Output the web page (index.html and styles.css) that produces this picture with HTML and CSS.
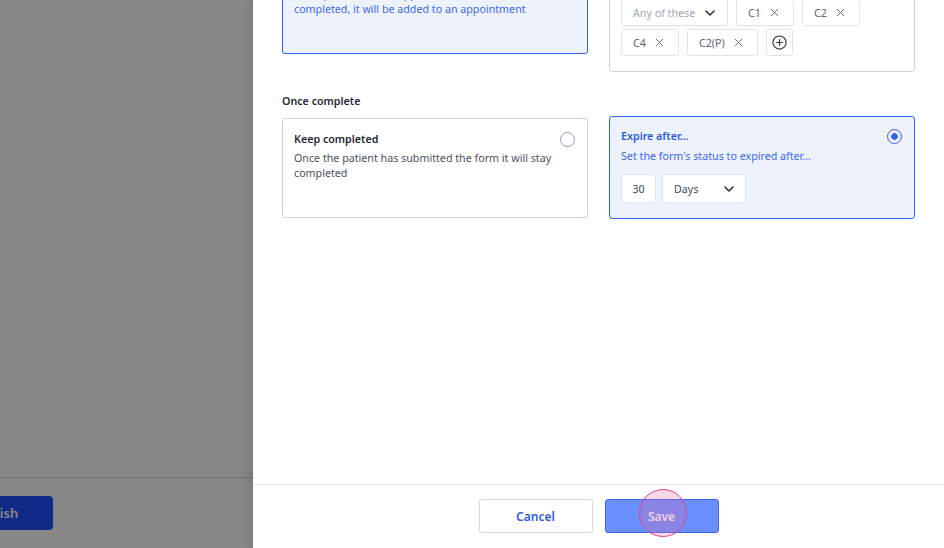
FILE: index.html
```html
<!DOCTYPE html>
<html lang="en">
<head>
    <meta charset="UTF-8">
    <title>Form settings</title>
    <link rel="stylesheet" href="styles.css">
</head>
<body>
    <!-- Page underneath the drawer -->
    <div class="page">
        <div class="page-main"></div>
        <div class="page-footer">
            <button class="publish-btn">Publish</button>
        </div>
    </div>
    <div class="overlay"></div>

    <!-- Settings drawer -->
    <aside class="drawer">
        <div class="drawer-body">
            <div class="drawer-content">
                <div class="option-grid top-grid">
                    <div class="option-card selected top-card">
                        <div class="option-head">
                            <span class="option-title">Add to appointment</span>
                        </div>
                        <div class="option-desc">If the patient has an appointment when the form is<br>completed, it will be added to an appointment</div>
                    </div>
                    <div class="filter-card">
                        <div class="filter-title">Appointment types</div>
                        <div class="chip-list">
                            <div class="select-chip">
                                <span class="placeholder">Any of these</span>
                                <svg class="chevron" viewBox="0 0 10 6"><path d="M1 1l4 4 4-4" fill="none" stroke="#2b3340" stroke-width="1.6" stroke-linecap="round" stroke-linejoin="round"/></svg>
                            </div>
                            <div class="chip">C1 <svg class="chip-x" viewBox="0 0 10 10"><path d="M1 1l8 8M9 1l-8 8" stroke="#6b7483" stroke-width="1.1"/></svg></div>
                            <div class="chip">C2 <svg class="chip-x" viewBox="0 0 10 10"><path d="M1 1l8 8M9 1l-8 8" stroke="#6b7483" stroke-width="1.1"/></svg></div>
                            <div class="chip">C4 <svg class="chip-x" viewBox="0 0 10 10"><path d="M1 1l8 8M9 1l-8 8" stroke="#6b7483" stroke-width="1.1"/></svg></div>
                            <div class="chip">C2(P) <svg class="chip-x" viewBox="0 0 10 10"><path d="M1 1l8 8M9 1l-8 8" stroke="#6b7483" stroke-width="1.1"/></svg></div>
                            <div class="chip add-chip">
                                <svg class="plus" viewBox="0 0 16 16"><circle cx="8" cy="8" r="7" fill="none" stroke="#2b3340" stroke-width="1.2"/><path d="M8 4.5v7M4.5 8h7" stroke="#2b3340" stroke-width="1.3"/></svg>
                            </div>
                        </div>
                    </div>
                </div>

                <div class="section-label">Once complete</div>

                <div class="option-grid">
                    <div class="option-card keep-card">
                        <div class="option-head">
                            <span class="option-title">Keep completed</span>
                            <span class="radio"></span>
                        </div>
                        <div class="option-desc">Once the patient has submitted the form it will stay completed</div>
                    </div>
                    <div class="option-card selected expire-card">
                        <div class="option-head">
                            <span class="option-title">Expire after...</span>
                            <span class="radio checked"></span>
                        </div>
                        <div class="option-desc">Set the form's status to expired after...</div>
                        <div class="expire-row">
                            <div class="num-box">30</div>
                            <div class="unit-select">
                                <span>Days</span>
                                <svg class="chevron" viewBox="0 0 10 6"><path d="M1 1l4 4 4-4" fill="none" stroke="#2b3340" stroke-width="1.6" stroke-linecap="round" stroke-linejoin="round"/></svg>
                            </div>
                        </div>
                    </div>
                </div>
            </div>
        </div>
        <div class="drawer-footer">
            <button class="btn btn-cancel">Cancel</button>
            <button class="btn btn-save">Save</button>
        </div>
    </aside>

    <!-- click indicator -->
    <div class="click-ring"></div>
</body>
</html>
```

FILE: styles.css
```css
body {
    margin: 0;
    width: 944px;
    height: 548px;
    overflow: hidden;
    position: relative;
    font-family: 'Noto Sans', sans-serif;
    font-size: 10.7px;
    color: #2b3340;
    background: #fff;
}
.page {
    height: 100%;
    display: flex;
    flex-direction: column;
}
.page-main {
    flex: 1;
}
.page-footer {
    height: 71px;
    border-top: 1px solid #d2d6dc;
    padding-top: 18px;
    box-sizing: border-box;
}
.publish-btn {
    margin-left: -63px;
    width: 116px;
    height: 34px;
    border: none;
    border-radius: 4px;
    background: #1d50ff;
    color: #fff;
    font-family: inherit;
    font-size: 13px;
    font-weight: 600;
}
.overlay {
    position: absolute;
    inset: 0;
    background: rgba(0, 0, 0, 0.47);
}
.drawer {
    position: absolute;
    top: 0;
    right: 0;
    bottom: 0;
    width: 691px;
    background: #fff;
    display: flex;
    flex-direction: column;
    box-shadow: -3px 0 10px rgba(0, 0, 0, 0.12);
}
.drawer-body {
    flex: 1;
    overflow: hidden;
}
.drawer-content {
    margin-top: -46px;
    padding: 0 29px;
}
.option-grid {
    display: grid;
    grid-template-columns: 1fr 1fr;
    column-gap: 21px;
    align-items: start;
}
.option-card {
    border: 1px solid #cdd3dd;
    border-radius: 3px;
    padding: 13px 12px 13px 11px;
    background: #fff;
    box-sizing: border-box;
}
.option-card.selected {
    border-color: #3561f3;
    background: #eef2fd;
}
.top-card {
    height: 100px;
    padding-top: 12px;
}
.keep-card {
    margin-top: 2px;
    height: 100px;
    padding-top: 12.5px;
}
.keep-card .option-desc {
    margin-top: 4px;
}
.expire-card {
    padding-top: 12px;
    padding-bottom: 15px;
}
.option-head {
    display: flex;
    justify-content: space-between;
    align-items: center;
    height: 15px;
}
.option-title {
    font-weight: 600;
    color: #1f2733;
    line-height: 15px;
}
.selected .option-title {
    color: #2d59e6;
}
.option-desc {
    margin-top: 5px;
    line-height: 15px;
    color: #4a5260;
}
.selected .option-desc {
    color: #3d68f0;
}
.radio {
    width: 15px;
    height: 15px;
    border: 1px solid #8c9dbf;
    border-radius: 50%;
    box-sizing: border-box;
    background: #fff;
}
.radio.checked {
    border: 1.5px solid #3561f3;
    background: radial-gradient(circle, #3561f3 0 3px, transparent 3.5px);
}
.filter-card {
    border: 1px solid #cdd3dd;
    border-radius: 3px;
    padding: 12px 12px 15px 11px;
    box-sizing: border-box;
}
.filter-title {
    font-weight: 600;
    line-height: 16px;
    margin-bottom: 16px;
}
.chip-list {
    display: flex;
    flex-wrap: wrap;
    gap: 3px 8px;
}
.chip, .select-chip {
    height: 27px;
    box-sizing: border-box;
    border: 1px solid #dfe4ec;
    border-radius: 3px;
    display: flex;
    align-items: center;
    color: #5b6472;
    background: #fff;
}
.chip {
    padding: 0 14px 0 11px;
    gap: 9px;
}
.chip-x {
    width: 9px;
    height: 9px;
}
.select-chip {
    width: 107px;
    padding: 0 12px 0 11px;
    justify-content: space-between;
}
.placeholder {
    color: #a0a9b8;
}
.chevron {
    width: 10px;
    height: 6px;
}
.add-chip {
    width: 27px;
    padding: 0;
    justify-content: center;
}
.plus {
    width: 15px;
    height: 15px;
}
.section-label {
    margin: 21px 0 7px;
    line-height: 16px;
    font-weight: 600;
    color: #1f2733;
}
.expire-row {
    display: flex;
    gap: 6px;
    margin-top: 10px;
}
.num-box, .unit-select {
    height: 29px;
    box-sizing: border-box;
    border: 1px solid #e1e5ec;
    border-radius: 3px;
    background: #fff;
    display: flex;
    align-items: center;
    color: #444c58;
}
.num-box {
    width: 35px;
    justify-content: center;
}
.unit-select {
    width: 84px;
    padding: 0 11px;
    justify-content: space-between;
}
.drawer-footer {
    border-top: 1px solid #e2e6ee;
    height: 64px;
    box-sizing: border-box;
    padding-top: 14px;
    display: flex;
    justify-content: center;
    align-items: flex-start;
    gap: 12px;
}
.btn {
    width: 114px;
    height: 34px;
    border-radius: 3px;
    font-family: inherit;
    font-size: 12px;
    font-weight: 600;
}
.btn-cancel {
    background: #fff;
    border: 1px solid #d6dde9;
    color: #2d5be3;
}
.btn-save {
    background: #6990fd;
    border: 1px solid #3c64f0;
    color: #f2f0fa;
}
.click-ring {
    position: absolute;
    left: 639px;
    top: 489px;
    width: 46px;
    height: 46px;
    border-radius: 50%;
    border: 1px solid #d9478a;
    background: rgba(240, 100, 160, 0.25);
}
```
